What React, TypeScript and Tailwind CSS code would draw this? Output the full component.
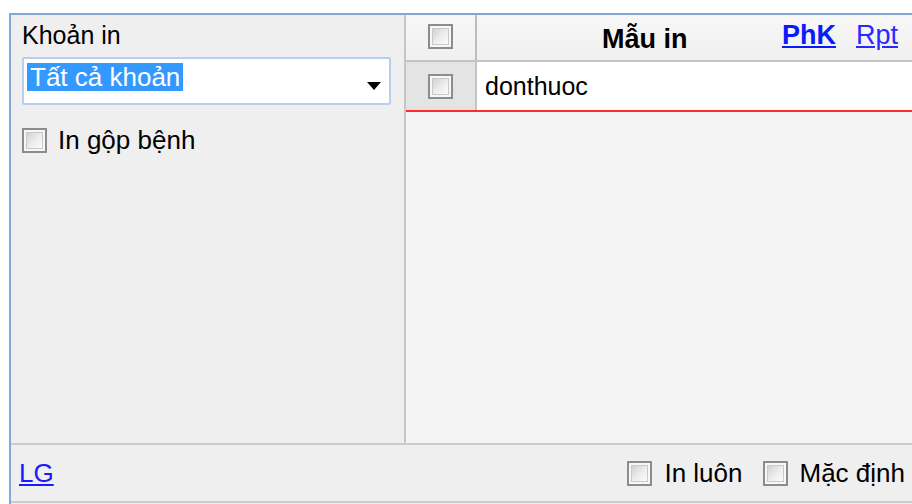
import React from "react";

const font = { fontFamily: '"Liberation Sans", Arial, sans-serif' };

function CheckBox() {
  return (
    <span className="flex h-[25px] w-[25px] shrink-0 items-center justify-center border-2 border-[#8c8c8c] bg-[#f7f7f7] p-[2px]">
      <span className="h-full w-full border border-[#c9c9c9] bg-gradient-to-br from-[#d2d2d2] via-[#ececec] to-[#fbfbfb]" />
    </span>
  );
}

function DropArrow() {
  return (
    <svg width="14" height="8" viewBox="0 0 14 8" className="shrink-0">
      <path d="M0 0 H14 L7 8 Z" fill="#000" />
    </svg>
  );
}

export default function App() {
  return (
    <div
      className="h-[504px] w-[912px] overflow-hidden bg-white pl-[9px] pt-[13px] text-[25px] text-black"
      style={font}
    >
      <div className="flex h-[491px] flex-col border-l-2 border-t-2 border-[#86a6da] bg-[#efefef]">
        <div className="flex h-[428px]">
          {/* filter panel */}
          <div className="w-[395px] shrink-0 border-r-2 border-[#c6c6c6] pl-[11px] pt-[6px]">
            <p className="leading-[29px]">Khoản in</p>
            <div className="mt-[7px] flex h-[48px] w-[369px] items-start justify-between rounded-[2px] border-2 border-[#b3d1ee] bg-white pl-[3px] pr-[8px] pt-[4px]">
              <span className="bg-[#3399ff] px-[3px] text-[26px] leading-[28px] text-white">Tất cả khoản</span>
              <span className="mt-[19px]">
                <DropArrow />
              </span>
            </div>
            <label className="mt-[21px] flex items-center gap-[11px] leading-[29px]">
              <CheckBox />
              <span className="text-[26px]">In gộp bệnh</span>
            </label>
          </div>

          {/* template grid */}
          <div className="flex flex-1 flex-col bg-[#f4f4f4]">
            <div className="flex h-[47px] border-b-2 border-[#c4c4c4] bg-gradient-to-b from-[#f7f7f7] to-[#f0f0f0]">
              <div className="flex w-[71px] shrink-0 items-center justify-center border-r-2 border-[#bcbcbc] pb-[2px]">
                <CheckBox />
              </div>
              <div className="flex flex-1 pr-[14px]">
                <span className="ml-[125px] mt-[9px] text-[27px] font-bold leading-[31px]">Mẫu in</span>
                <span className="ml-auto mt-[5px] text-[27px] font-bold leading-[31px] text-[#0a1aff] underline">PhK</span>
                <span className="ml-[20px] mt-[5px] text-[27px] leading-[31px] text-[#2a2aff] underline">Rpt</span>
              </div>
            </div>
            <div className="flex h-[50px] border-b-2 border-[#ff2a2a]">
              <div className="flex w-[71px] shrink-0 items-center justify-center border-r-2 border-[#c4c4c4] bg-[#e4e4e4]">
                <CheckBox />
              </div>
              <div className="flex flex-1 items-center bg-white pl-[8px] leading-[29px]">donthuoc</div>
            </div>
          </div>
        </div>

        {/* footer */}
        <div className="flex h-[60px] items-center border-b-2 border-t-2 border-[#cbcbcb] pl-[8px] pr-[7px] text-[26px]">
          <span className="text-[#1a1aff] underline">LG</span>
          <label className="ml-auto flex items-center gap-[12px]">
            <CheckBox />
            <span>In luôn</span>
          </label>
          <label className="ml-[20px] flex items-center gap-[12px]">
            <CheckBox />
            <span>Mặc định</span>
          </label>
        </div>
      </div>
    </div>
  );
}
